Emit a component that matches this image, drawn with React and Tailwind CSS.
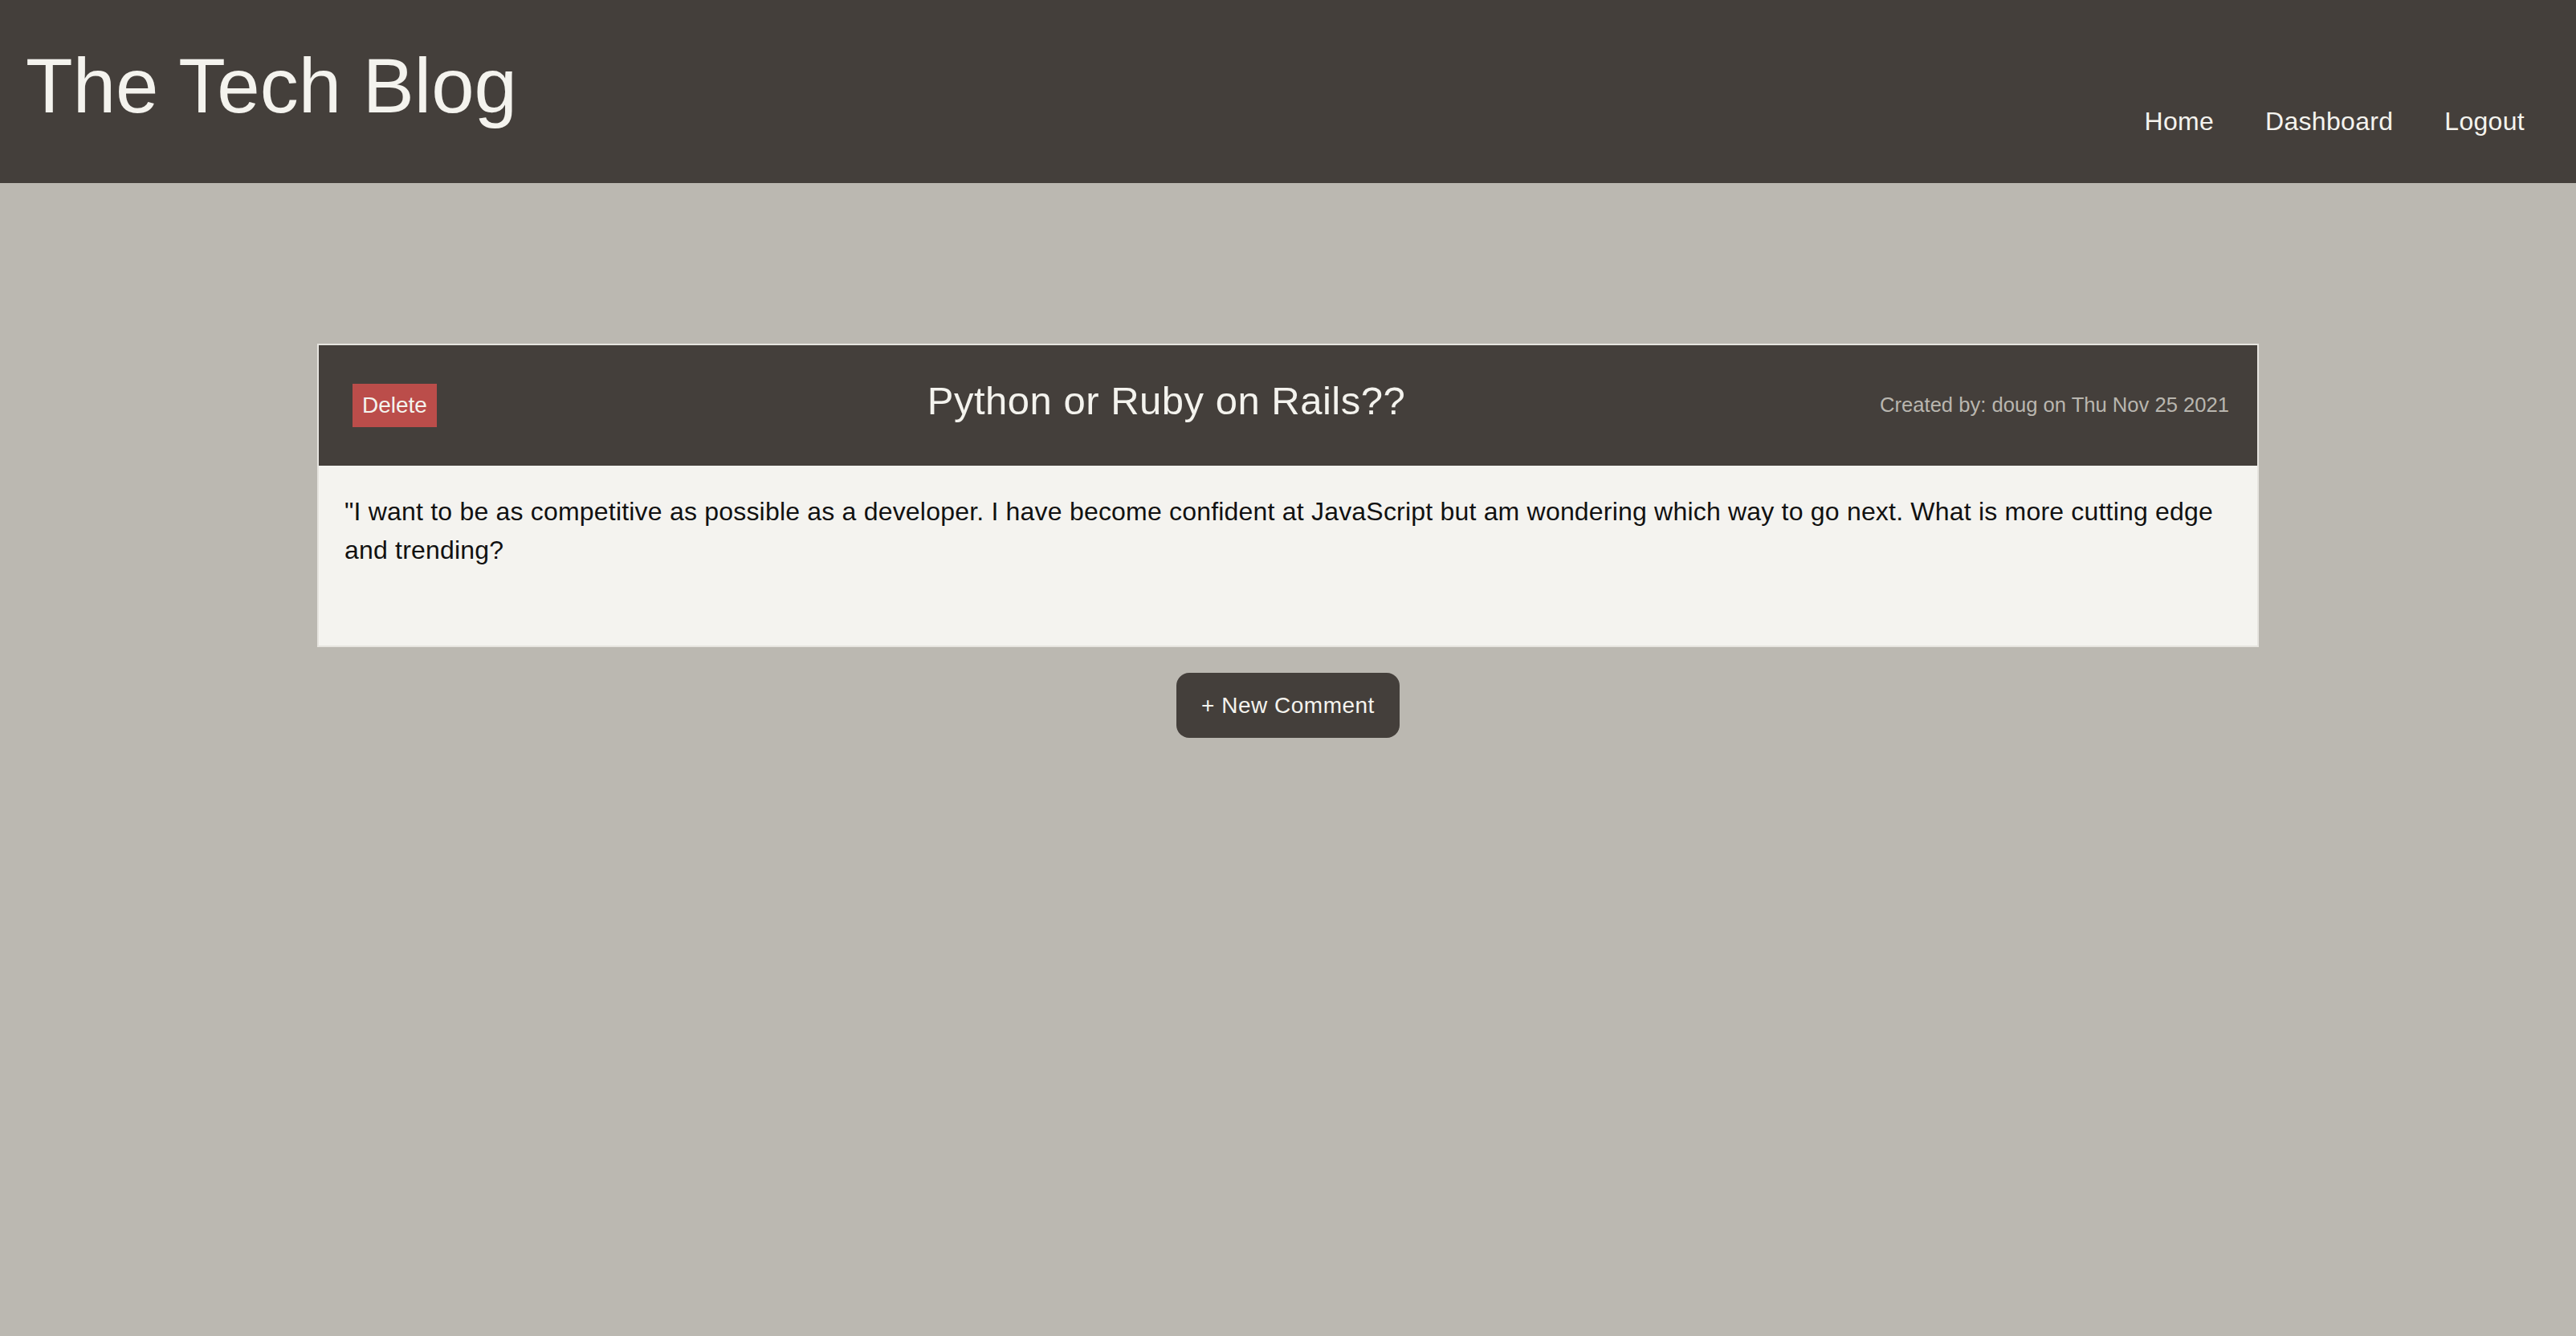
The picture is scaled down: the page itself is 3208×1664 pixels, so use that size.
export default function App() {
  return (
    <div className="min-h-screen bg-[#bbb8b1] font-['Liberation_Sans',Arial,sans-serif]">
      <header className="h-[228px] bg-[#443f3b] flex justify-between items-start pl-8 pr-8">
        <h1 className="pt-[59px] text-[96px] leading-none text-[#f4f3ee]">The Tech Blog</h1>
        <nav className="pt-[135px] flex text-[32px] leading-none tracking-[0.3px] text-[#f4f3ee]">
          <a className="px-8">Home</a>
          <a className="px-8">Dashboard</a>
          <a className="px-8">Logout</a>
        </nav>
      </header>

      <main className="pt-[200px] flex flex-col items-center">
        <div className="w-[2418px] border-2 border-[#e6e4df]">
          <div className="h-[150px] bg-[#443f3b] flex items-center justify-between pl-[42px] pr-[35px]">
            <button className="h-[54px] px-3 bg-[#bb4d4a] text-[28px] text-[#f4f3ee] leading-none">Delete</button>
            <h2 className="ml-[20px] mb-[11px] text-[49px] leading-none tracking-[0.5px] text-[#f4f3ee]">Python or Ruby on Rails??</h2>
            <span className="text-[25.6px] leading-none text-[#b9b6af]">Created by: doug on Thu Nov 25 2021</span>
          </div>
          <div className="bg-[#f4f3ef] px-8 pt-[33px] pb-[95px]">
            <p className="text-[32px] leading-[48px] tracking-[0.2px] text-[#111]">
              "I want to be as competitive as possible as a developer. I have become confident at JavaScript but am wondering which way to go next. What is more cutting edge and trending?
            </p>
          </div>
        </div>
        <button className="mt-8 w-[278px] h-[81px] rounded-2xl bg-[#443f3b] text-[28px] tracking-[0.5px] text-[#f4f3ee]">+ New Comment</button>
      </main>
    </div>
  )
}
